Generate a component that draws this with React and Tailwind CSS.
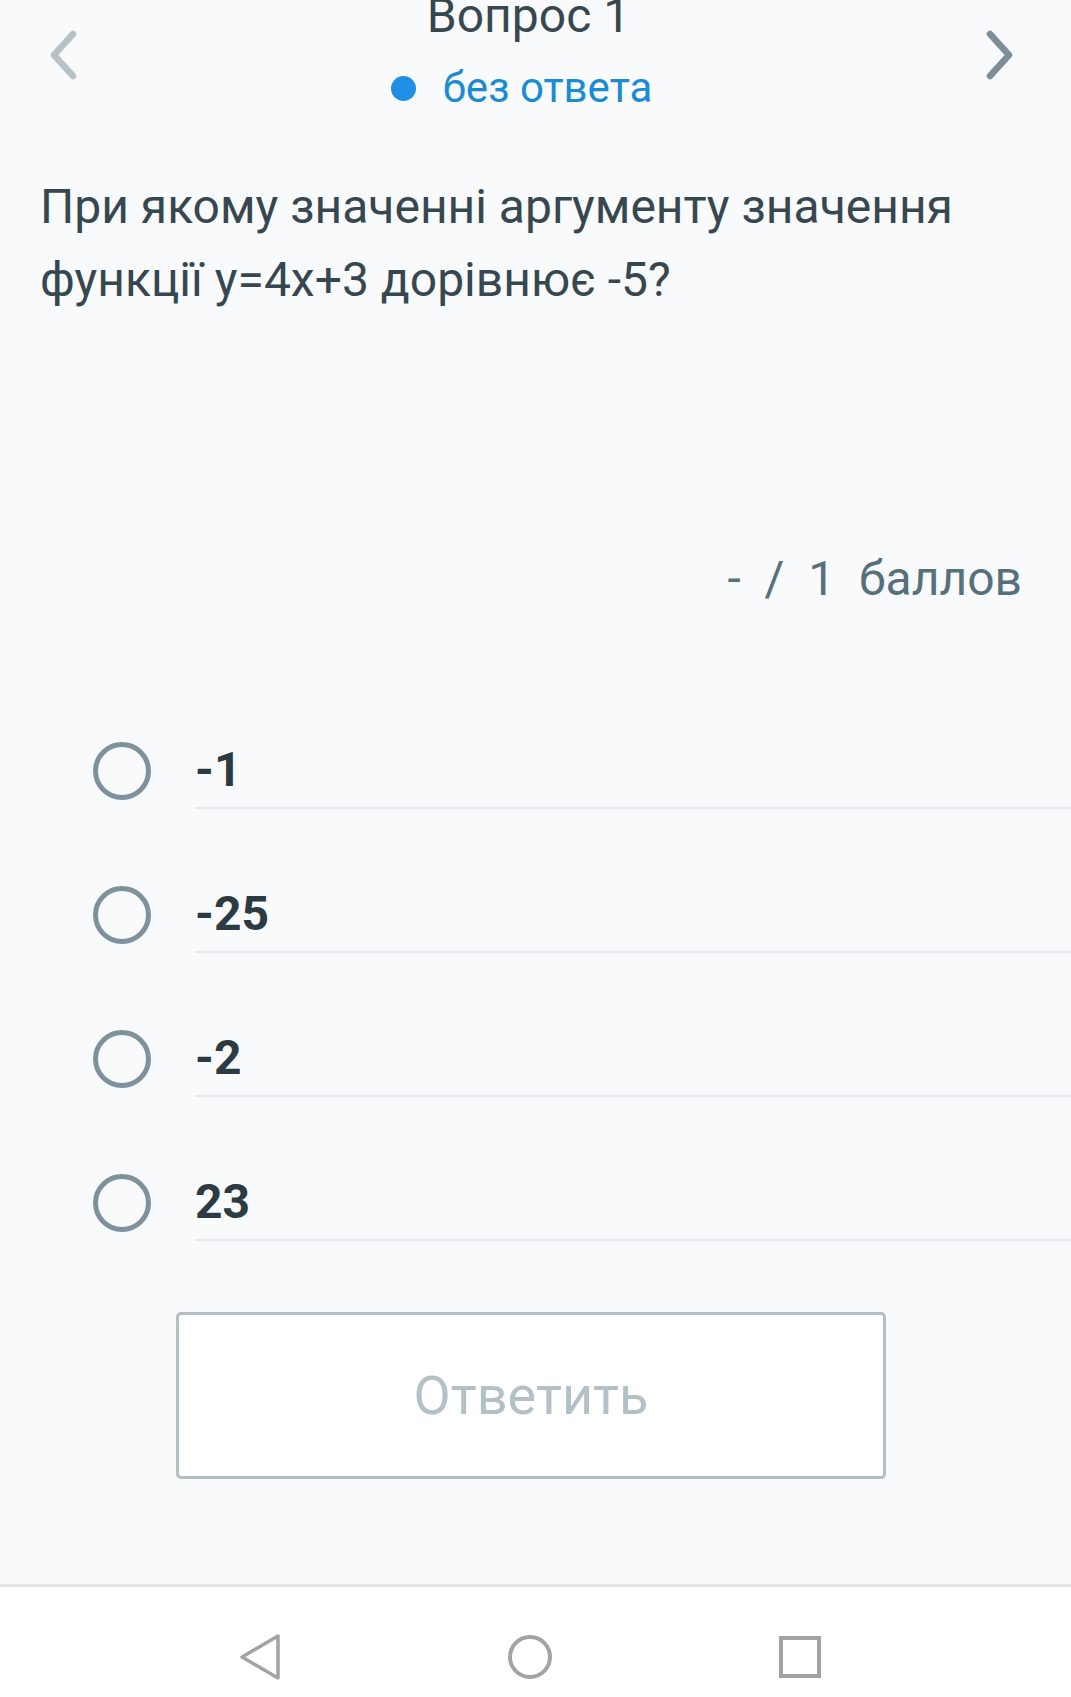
const options = ["-1", "-25", "-2", "23"];

const Chevron = ({ dir, color }) => (
  <svg width="34" height="50" viewBox="0 0 34 50" fill="none">
    <polyline
      points={dir === "left" ? "27,4 8,25 27,46" : "7,4 26,25 7,46"}
      stroke={color}
      strokeWidth="6.5"
      strokeLinecap="round"
      strokeLinejoin="round"
    />
  </svg>
);

const Radio = () => (
  <div className="w-[58px] h-[58px] rounded-full border-[5px] border-[#7d929c]" />
);

export default function App() {
  return (
    <div className="w-[1071px] h-[1697px] flex flex-col bg-[#f8fafb] font-['Roboto','Noto_Sans',sans-serif] overflow-hidden">
      {/* шапка */}
      <div className="flex items-start justify-between pl-[46px] pr-[54px] h-[140px]">
        <div className="mt-[30px]">
          <Chevron dir="left" color="#b7c2c8" />
        </div>
        <div className="flex flex-col items-center -mt-[12px] -ml-[6px]">
          <div className="text-[48px] leading-[56px] text-[#37474f]">Вопрос 1</div>
          <div className="flex items-center gap-[27px] mt-[20px] -ml-[14px]">
            <span className="w-[25px] h-[25px] rounded-full bg-[#1e8ee6]" />
            <span className="text-[42px] leading-[48px] text-[#1b8bd2]">без ответа</span>
          </div>
        </div>
        <div className="mt-[30px]">
          <Chevron dir="right" color="#7c8f99" />
        </div>
      </div>

      {/* вопрос */}
      <div className="pl-[40px] pr-[40px] mt-[30px] text-[48px] leading-[73px] text-[#37474f]">
        При якому значенні аргументу значення функції y=4x+3 дорівнює -5?
      </div>

      <div className="flex justify-end pr-[49px] mt-[235px] text-[48px] leading-[56px] text-[#56707c] whitespace-pre">
        {"-  /  1  баллов"}
      </div>

      {/* варианты */}
      <div className="mt-[126px] flex flex-col gap-[68px]">
        {options.map((o) => (
          <div key={o} className="flex items-center">
            <div className="w-[195px] pl-[93px] flex items-center">
              <Radio />
            </div>
            <div className="flex-1 h-[76px] flex items-center border-b-2 border-[#e7eaec] text-[48px] font-bold text-[#2c3a41]">
              {o}
            </div>
          </div>
        ))}
      </div>

      <div className="mt-[71px] ml-[176px] w-[710px] h-[167px] rounded-[5px] border-[3px] border-[#b3bfc5] bg-white flex items-center justify-center text-[54px] text-[#b3c0c6]">
        Ответить
      </div>

      {/* системная панель */}
      <div className="mt-auto h-[113px] border-t-[3px] border-[#e3e3e3] bg-white flex items-start justify-center gap-[224px] pt-[46px] pr-[11px]">
        <svg width="46" height="48" viewBox="0 0 46 48" fill="none">
          <path d="M41 3 L41 45 L5 24 Z" stroke="#a3a3a3" strokeWidth="3.5" strokeLinejoin="round" />
        </svg>
        <svg width="46" height="48" viewBox="0 0 46 48" fill="none">
          <circle cx="23" cy="24" r="20" stroke="#a3a3a3" strokeWidth="4" />
        </svg>
        <svg width="46" height="48" viewBox="0 0 46 48" fill="none">
          <rect x="4" y="5" width="38" height="38" stroke="#a3a3a3" strokeWidth="4" />
        </svg>
      </div>
    </div>
  );
}
